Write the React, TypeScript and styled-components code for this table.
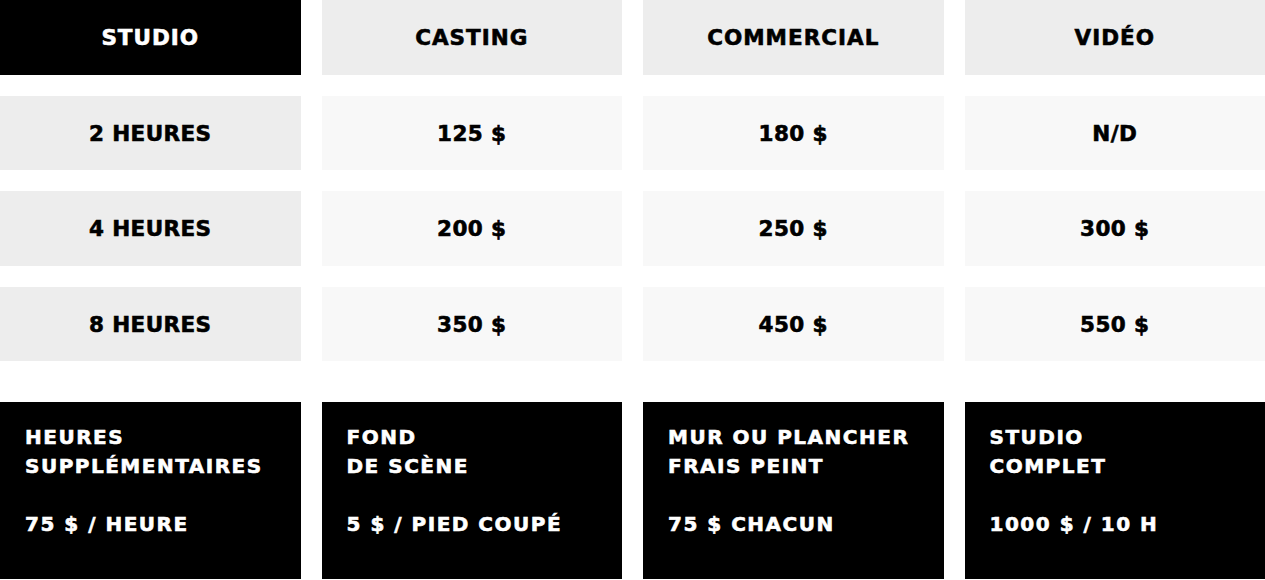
import React from "react";
import styled, { createGlobalStyle } from "styled-components";

const Global = createGlobalStyle`
  html, body { margin: 0; padding: 0; background: #ffffff; }
  body { font-family: "DejaVu Sans", "Liberation Sans", sans-serif; }
`;

const Page = styled.div`
  width: 1265px;
  display: flex;
  flex-direction: column;
  gap: 41px;
`;

const Table = styled.div`
  display: grid;
  grid-template-columns: repeat(4, 1fr);
  grid-auto-rows: 74.5px;
  column-gap: 21px;
  row-gap: 21px;
`;

type Tone = "dark" | "mid" | "light";

const Cell = styled.div<{ $tone: Tone; $head?: boolean }>`
  display: flex;
  align-items: center;
  justify-content: center;
  padding-top: 1px;
  box-sizing: border-box;
  background: ${(p) => (p.$tone === "dark" ? "#000000" : p.$tone === "mid" ? "#ededed" : "#f8f8f8")};
  color: ${(p) => (p.$tone === "dark" ? "#ffffff" : "#000000")};
  font-family: "DejaVu Sans", "Liberation Sans", sans-serif;
  font-weight: 700;
  font-size: 21.5px;
  letter-spacing: ${(p) => (p.$head ? "1px" : "0.4px")};
  -webkit-text-stroke: 0.6px currentColor;
  text-transform: uppercase;
`;

const Extras = styled.div`
  display: grid;
  grid-template-columns: repeat(4, 1fr);
  column-gap: 21px;
`;

const ExtraCard = styled.div`
  background: #000000;
  color: #ffffff;
  height: 177px;
  box-sizing: border-box;
  padding: 21px 10px 0 25px;
  font-family: "DejaVu Sans", "Liberation Sans", sans-serif;
  font-weight: 700;
  font-size: 20px;
  line-height: 29px;
  letter-spacing: 1.5px;
  -webkit-text-stroke: 0.6px currentColor;
`;

const ExtraLine = styled.div`
  white-space: nowrap;
`;

const Spacer = styled.div`
  height: 29px;
`;

const headers = ["STUDIO", "CASTING", "COMMERCIAL", "VIDÉO"];
const rows = [
  ["2 HEURES", "125 $", "180 $", "N/D"],
  ["4 HEURES", "200 $", "250 $", "300 $"],
  ["8 HEURES", "350 $", "450 $", "550 $"],
];

const extras = [
  { title: ["HEURES", "SUPPLÉMENTAIRES"], price: "75 $ / HEURE" },
  { title: ["FOND", "DE SCÈNE"], price: "5 $ / PIED COUPÉ" },
  { title: ["MUR OU PLANCHER", "FRAIS PEINT"], price: "75 $ CHACUN" },
  { title: ["STUDIO", "COMPLET"], price: "1000 $ / 10 H" },
];

export default function App() {
  return (
    <>
      <Global />
      <Page>
        <Table>
          {headers.map((h, i) => (
            <Cell key={h} $head $tone={i === 0 ? "dark" : "mid"}>
              {h}
            </Cell>
          ))}
          {rows.map((r) =>
            r.map((c, i) => (
              <Cell key={r[0] + i} $tone={i === 0 ? "mid" : "light"}>
                {c}
              </Cell>
            ))
          )}
        </Table>
        <Extras>
          {extras.map((e) => (
            <ExtraCard key={e.price}>
              {e.title.map((t) => (
                <ExtraLine key={t}>{t}</ExtraLine>
              ))}
              <Spacer />
              <ExtraLine>{e.price}</ExtraLine>
            </ExtraCard>
          ))}
        </Extras>
      </Page>
    </>
  );
}
